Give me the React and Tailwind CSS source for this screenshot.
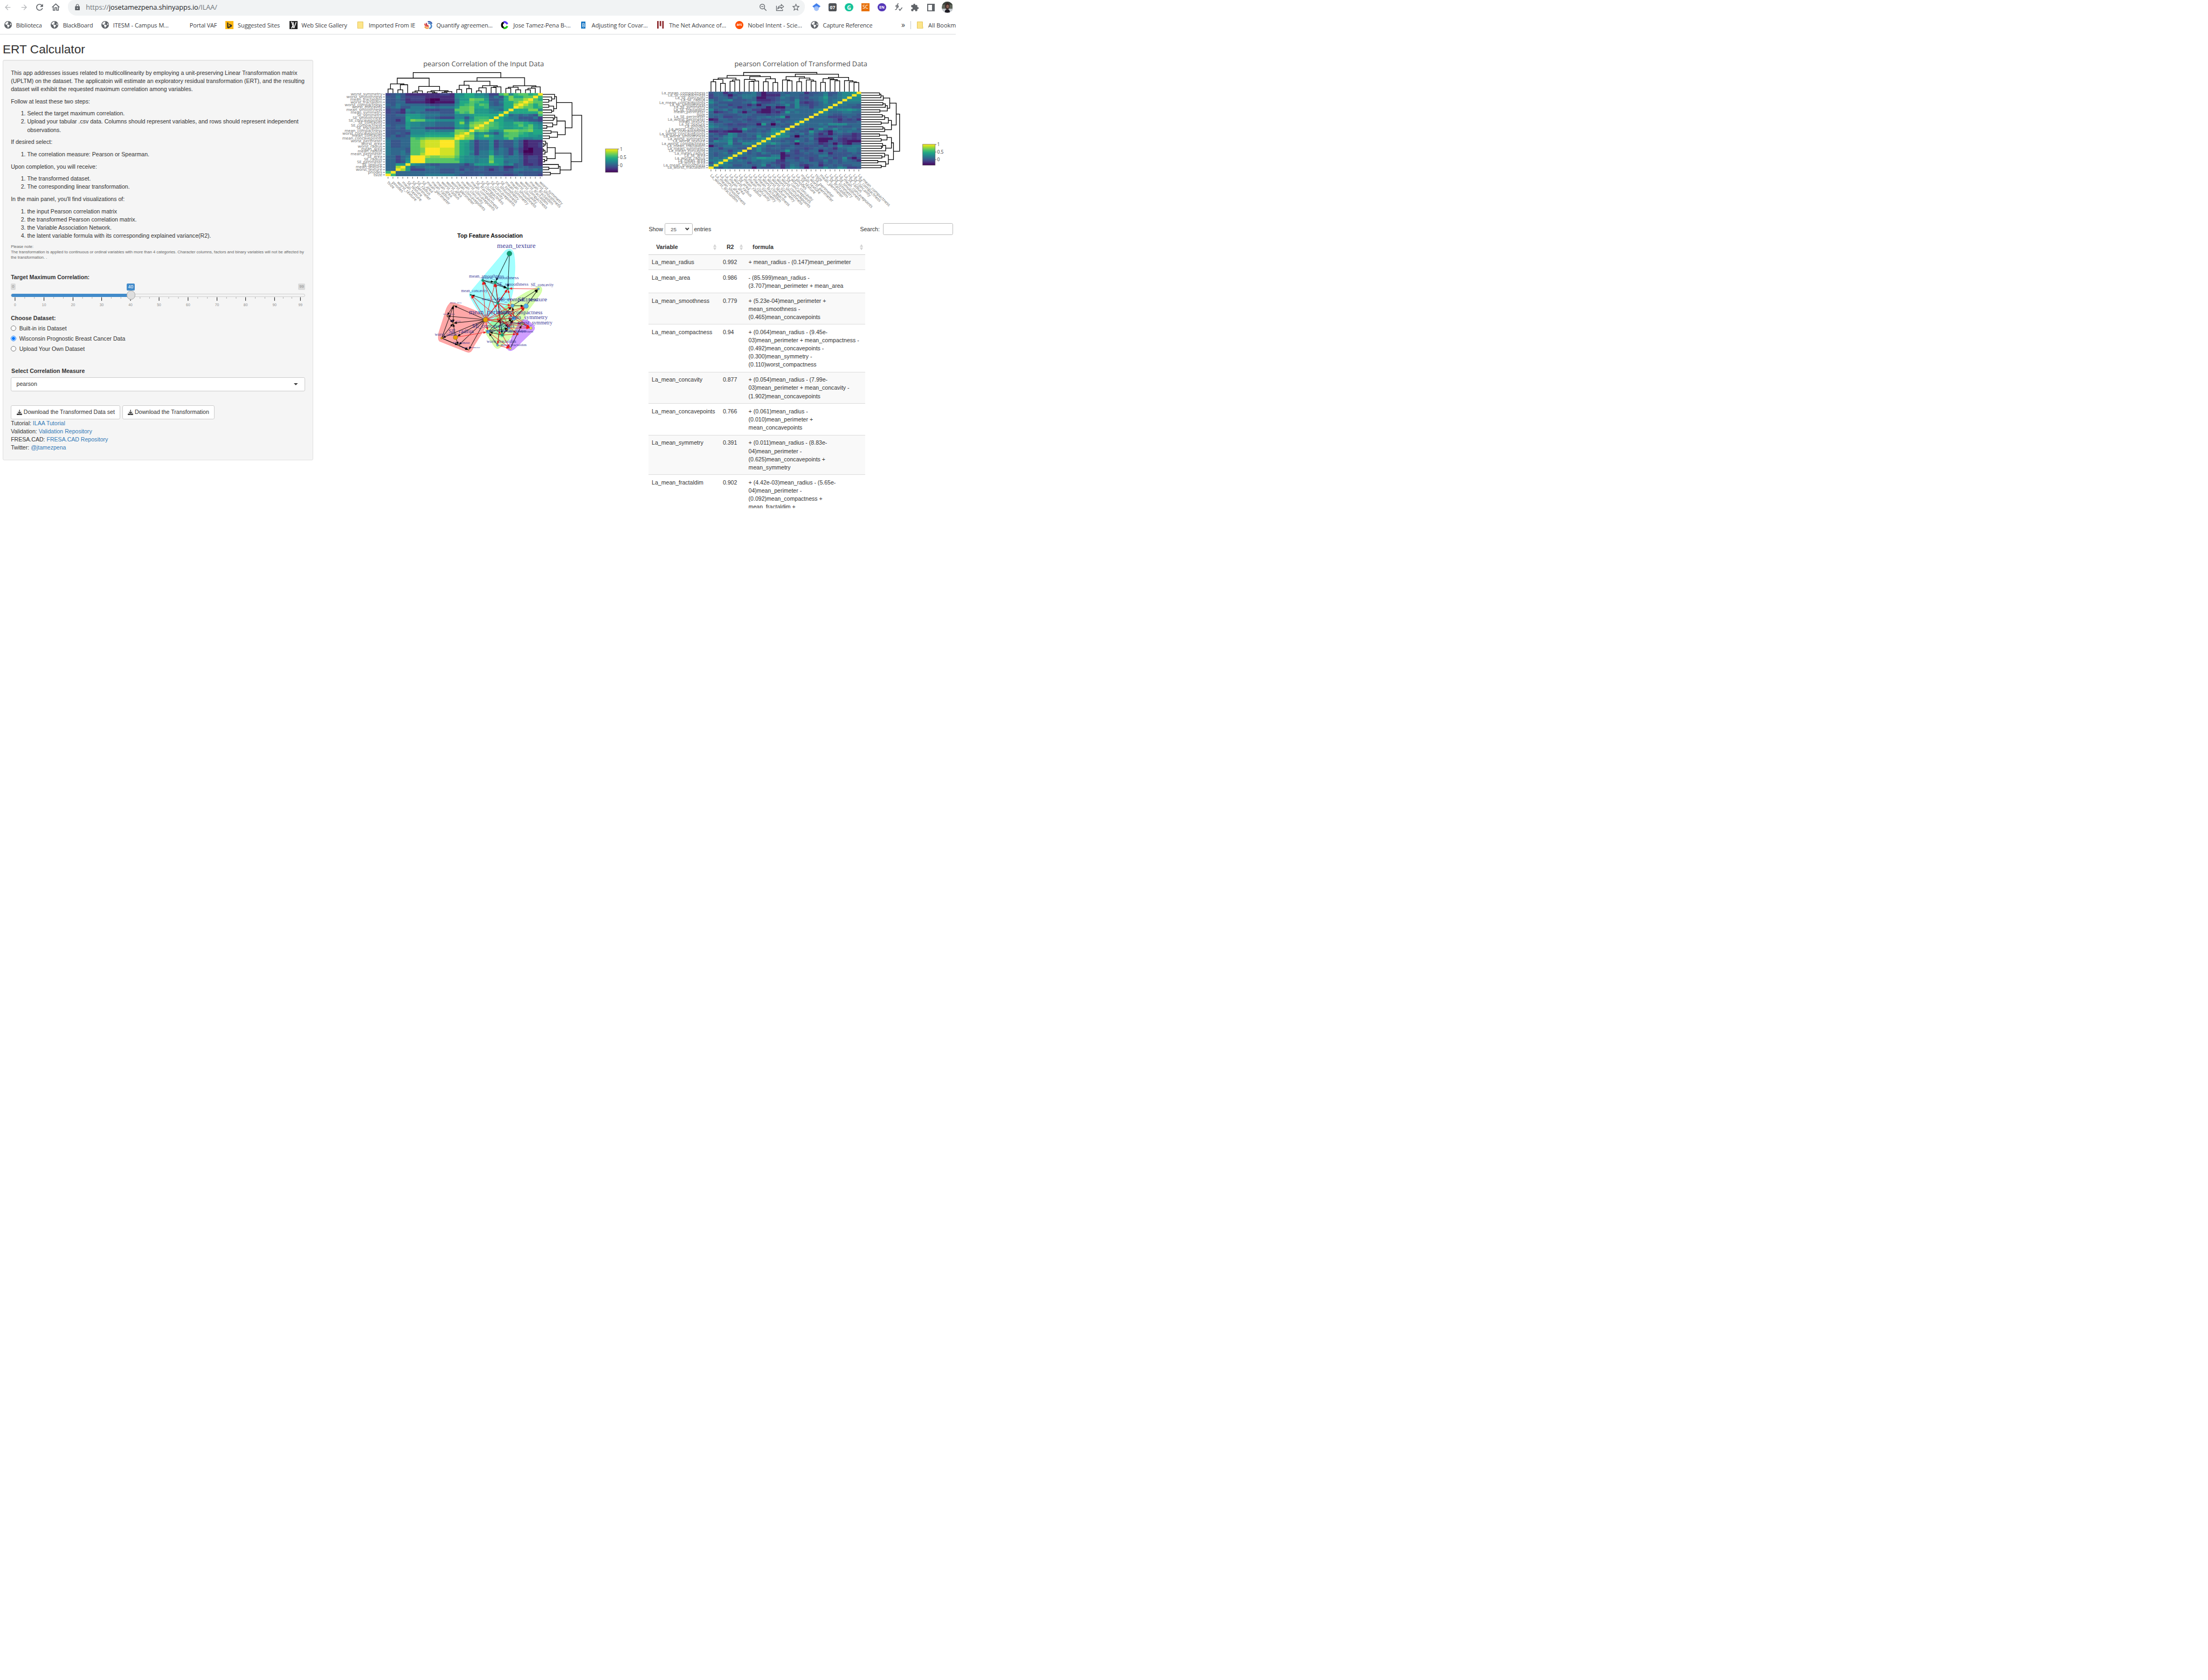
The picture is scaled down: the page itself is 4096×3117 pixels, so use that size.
import React from "react";
import { ArrowLeft, ArrowRight } from "lucide-react";
import { MdRefresh, MdOutlineHome, MdLock, MdStarBorder, MdExtension } from "react-icons/md";
import { FaEarthAmericas, FaDownload } from "react-icons/fa6";

/* ---------- colour scale ---------- */
const VIRIDIS = [
  [68, 1, 84], [72, 36, 117], [65, 68, 135], [53, 95, 141], [42, 120, 142],
  [33, 145, 140], [34, 168, 132], [68, 191, 112], [122, 209, 81], [189, 223, 38], [253, 231, 37],
];
function viridis(t) {
  const p = Math.min(Math.max(t, 0), 1) * 10;
  const i = Math.min(Math.floor(p), 9);
  const f = p - i;
  const c = VIRIDIS[i].map((v, k) => Math.round(v + (VIRIDIS[i + 1][k] - v) * f));
  return `rgb(${c.join(",")})`;
}

/* ---------- correlation matrices: lower triangles, one hex digit per cell ---------- */
const parseRows = (text) => text.trim().split("\n").map((l) => l.replace(/\s/g, ""));
const INPUT_ROWS = parseRows(`
f
af
55f
55df
5588 f
5534 8f
5535 7ff
5535 6fff
6556 5bbd f
6556 4bbc ff
6555 4bbc fff
6445 5bbd eeef
6445 5bbd eeef f
6445 5bbd eeef ff
5555 5bab cccc ccf
4534 5888 9999 99ef
4454 3777 8888 89cd f
4444 5777 6766 66cc bf
4454 8666 3333 3378 7bf
5455 8776 6655 5589 8cdf
4444 8776 6655 558c 7bcc f
4424 9cbb 8877 7789 68ab bf
4444 9887 5543 3377 47aa a9f
4455 8887 6665 5577 7899 999f
3432 6565 5554 449b ac88 8779 f
3442 7666 3334 44bb bc88 8765 9f
4564 4666 6656 668b bc99 a666 99f
5465 5555 4334 4479 ab9b a545 99df
4455 2222 1011 1169 9ba9 9546 99bd f
4454 2333 1002 2268 8cbb 8445 9cbb df
4464 3333 2222 2278 9988 7464 9c99 bbf
3454 2222 2223 3277 9977 633a c7ab b9af
`);
const TRANSFORMED_ROWS = parseRows(`
f
6f
47f
667f
5657 f
5455 6f
5456 46f
5555 356f
5535 5544 f
1456 6555 5f
5555 8447 76f
4766 8465 567f
4356 7454 4467 f
4546 7644 5485 6f
5433 7644 5565 68f
2232 1115 4454 578f
5445 4248 5455 4766 f
7655 4444 5544 4454 5f
6554 3433 4418 4045 45f
5345 5445 4445 5464 557f
1255 4454 3454 4544 4556 f
5453 3445 4455 6568 2555 5f
5554 4455 5444 3445 5555 55f
5234 5641 4521 1324 8565 556f
7456 4654 5331 1343 5655 5567 f
5544 5424 4544 1411 5475 5355 6f
5455 3444 2414 5545 7474 4345 66f
7544 4445 5743 3456 5573 2345 756f
6456 7444 5522 2345 5474 4456 7566 f
3455 3546 6511 3346 5454 3556 8556 7f
3554 1456 6641 2225 6554 4455 7456 77f
4552 4545 5641 3335 4555 2445 6446 778f
`);
const INPUT_LABELS = ["tsize", "pnodes", "worst_texture", "mean_texture", "SE_texture", "SE_perimeter", "SE_radius", "SE_area", "mean_perimeter", "mean_radius", "mean_area", "worst_radius", "worst_area", "worst_perimeter", "mean_concavepoints", "mean_concavity", "worst_concavepoints", "mean_compactness", "SE_fractaldim", "SE_compactness", "SE_concavity", "SE_concavepoints", "SE_smoothness", "SE_symmetry", "mean_symmetry", "mean_smoothness", "worst_concavity", "worst_compactness", "worst_fractaldim", "mean_fractaldim", "worst_smoothness", "worst_symmetry"];
const TRANSFORMED_LABELS = ["La_worst_fractaldim", "La_mean_smoothness", "La_worst_area", "La_mean_area", "La_worst_radius", "La_SE_area", "La_mean_radius", "La_mean_concavity", "La_mean_symmetry", "La_mean_fractaldim", "La_worst_compactness", "La_worst_texture", "La_worst_symmetry", "La_worst_smoothness", "La_worst_concavepoints", "La_SE_concavepoints", "La_worst_concavity", "La_pnodes", "La_SE_texture", "mean_texture", "La_worst_perimeter", "La_SE_perimeter", "tsize", "mean_perimeter", "La_SE_fractaldim", "La_SE_symmetry", "La_SE_smoothness", "La_mean_concavepoints", "La_SE_radius", "La_SE_concavity", "La_SE_compactness", "La_mean_compactness"];

/* dendrogram nodes: [height, left, right]; numbers are leaves */
const INPUT_TREE = [121,
  [88, [54, [24, 0, 1], [49, [19, 2, 3], 4]], [39, [13, [6, 5, 6], 7], [14, [7, 8, [2, 9, 10]], [9, [4, 11, 12], 13]]]],
  [91,
    [70, [46, [21, 14, 15], [26, 16, 17]], [44, [31, [13, 18, 19], 20], [37, [33, 21, 22], 23]]],
    [43, [34, [28, 24, 25], [19, 26, 27]], [37, [28, [19, 28, 29], 30], 31]]]];
const TRANSFORMED_TREE = [113,
  [95,
    [80, [72, [59, 0, 1], [49, 2, 3]], [69, [61, 4, 5], 6]],
    [89, [72, 7, [63, [60, 8, 9], 10]], [76, [59, 11, 12], [54, 13, 14]]]],
  [103,
    [89, [69, 15, [64, 16, 17]], [80, [59, 18, 19], [69, 20, [62, 21, 22]]]],
    [84, [77, [55, 23, 24], [71, 25, [64, 26, 27]]], [65, 28, [58, 29, [54, 30, 31]]]]]];

function treePaths(tree) {
  const out = [];
  const walk = (n) => {
    if (typeof n === "number") return { p: n, h: 0 };
    const a = walk(n[1]);
    const b = walk(n[2]);
    out.push([a, b, n[0]]);
    return { p: (a.p + b.p) / 2, h: n[0] };
  };
  walk(tree);
  return out;
}

function Heatmap({ id, w, title, titleX, titleW, rows, labels, tree, box, cb, tickX, labelX, labelY, size }) {
  const { x, y, width, height } = box;
  const cw = width / 32;
  const ch = height / 32;
  const px = (i) => x + (i + 0.5) * cw;
  const py = (i) => y + height - (i + 0.5) * ch;
  const cells = [];
  for (let r = 0; r < 32; r++)
    for (let c = 0; c < 32; c++) {
      const v = rows[Math.max(r, c)][Math.min(r, c)];
      cells.push(<rect key={r * 32 + c} x={x + c * cw} y={y + height - (r + 1) * ch} width={c < 31 ? cw + 0.5 : cw} height={r > 0 ? ch + 0.5 : ch} fill={viridis(parseInt(v, 16) / 15)} />);
    }
  const topH = tree[0];
  const paths = treePaths(tree);
  return (
    <svg width={w} height="320" viewBox={`0 0 ${w} 320`} className="block font-['Open_Sans','Noto_Sans',sans-serif]">
      <defs>
        <linearGradient id={id} x1="0" y1="1" x2="0" y2="0">
          {VIRIDIS.map((c, i) => <stop key={i} offset={i / 10} stopColor={`rgb(${c.join(",")})`} />)}
        </linearGradient>
      </defs>
      <text x={titleX} y="20" textLength={titleW} fontSize="13.6" fill="#4d4d4d">{title}</text>
      <g>{cells.reverse()}</g>
      <g fill="none" stroke="#000" strokeWidth="1.35">
        {paths.map(([a, b, h], i) => {
          const Y = (v) => y - (v / topH) * box.treeTop;
          const X = (v) => x + width + (v / topH) * box.treeRight;
          return (
            <React.Fragment key={i}>
              <path d={`M${px(a.p)} ${Y(a.h)}V${Y(h)}H${px(b.p)}V${Y(b.h)}`} />
              <path d={`M${X(a.h)} ${py(a.p)}H${X(h)}V${py(b.p)}H${X(b.h)}`} />
            </React.Fragment>
          );
        })}
      </g>
      <g stroke="#444" strokeWidth="0.9">
        {labels.map((l, i) => <path key={l} d={`M${tickX} ${py(i)}h4M${px(i)} ${y + height + 1.2}v3.6`} />)}
      </g>
      <g fontSize={size} fill="#6b6b6b">
        {labels.map((l, i) => <text key={l} x={labelX} y={py(i) + 2.4} textAnchor="end">{l}</text>)}
        {labels.map((l, i) => <text key={l} transform={`translate(${px(i) - 2} ${labelY}) rotate(45)`}>{l}</text>)}
      </g>
      <rect x={cb.x} y={cb.y} width={cb.w} height={cb.h} fill={`url(#${id})`} stroke="#444" strokeOpacity=".6" />
      {["1", "0.5", "0"].map((t, i) => (
        <g key={t}>
          <path d={`M${cb.x + cb.w} ${cb.y + 0.3 + i * cb.step}h2.5`} stroke="#444" strokeWidth=".8" />
          <text x={cb.x + cb.w + 4} y={cb.y + 3.6 + i * cb.step} fontSize="9" fill="#444">{t}</text>
        </g>
      ))}
    </svg>
  );
}

/* ---------- network ---------- */
const G = "#109e73", B = "#56b4e9", O = "#e69f00", Y = "#f0e442", R = "#ee2222";
const NODES = {
  mt: [540, 173, 15, G], ms: [383, 331, 7, G], ws: [457, 342, 9, G], ss: [531, 379, 7, G], mc: [312, 416, 5, G], mcp: [472, 466, 7, G],
  sc: [711, 381, 6, B], sco: [558, 480, 10, B], st: [638, 482, 14, B], wc: [566, 555, 12, B], scp: [414, 634, 10, B], wf: [470, 713, 6, B], sb: [537, 612, 7, B],
  mp: [399, 563, 14, O], sr: [222, 667, 13, O], wr: [141, 671, 6, O], ma: [211, 479, 3, O], wa: [172, 540, 3, O], sa: [209, 583, 3, O], sp: [240, 713, 3, O], wp: [300, 741, 3, O],
  wsy: [666, 612, 8, Y], msy: [615, 588, 9, "#c9c04a"], mf: [545, 732, 6, Y], r1: [586, 647, 7, R], g1: [498, 653, 8, G], h: [488, 560, 3, G],
};
const BLACK = "mt-ws mt-ss ms-ws ms-ss ws-ss mcp-ms mcp-ws mcp-ss mcp-mc sco-sc st-sc sco-st mp-ma mp-wa mp-sa mp-wr mp-sr mp-sp mp-wp wr-ma wr-sa sr-sa sr-sp wr-sp wr-wp sp-wp ma-wa ma-sa wa-sa wf-scp wf-h mcp-g1 scp-wc scp-sb wc-sco wc-st g1-wc g1-sb sb-wc mf-msy msy-wsy h-wc h-sb scp-h g1-scp h-sco".split(" ");
const RED = "mp-ms mp-ws mp-ss mp-mc mp-mcp mp-sco mp-st mp-wc mp-scp sc-ss mcp-ss mcp-wc mcp-sco mcp-sb mcp-wsy sr-scp mp-g1 mp-wsy mp-msy h-ms h-ws h-mc h-st wc-ss g1-mf wf-mf scp-mf h-r1 g1-r1 g1-st h-wf wc-wsy sb-wsy mp-h".split(" ");
const NET_LABELS = [
  ["mean_texture", 467, 694, 130, 40], ["mean_smoothness", 302, 508, 307, 28], ["worst_smoothness", 375, 595, 315, 28], ["SE_smoothness", 465, 652, 354, 28],
  ["SE_concavity", 666, 801, 358, 24], ["mean_concavity", 256, 410, 395, 24], ["mean_concavepoints", 378, 560, 441, 22], ["SE_compactness", 470, 705, 445, 33],
  ["SE_texture", 590, 762, 445, 35], ["mean_area", 190, 257, 463, 15], ["worst_area", 149, 217, 528, 15], ["mean_perimeter", 302, 560, 521, 39],
  ["worst_compactness", 475, 735, 521, 33], ["mean_symmetry", 533, 766, 548, 36], ["SE_area", 193, 252, 571, 16], ["worst_symmetry", 590, 793, 582, 31],
  ["SE_concavepoints", 320, 570, 602, 33], ["SE_radius", 181, 330, 633, 36], ["worst_radius", 100, 230, 650, 24], ["mean_compactness", 530, 680, 632, 21], ["SE_symmetry", 480, 620, 584, 27],
  ["worst_concavity", 400, 560, 628, 25], ["SE_fractaldim", 500, 640, 630, 22],
  ["SE_perimeter", 208, 307, 700, 18], ["worst_perimeter", 260, 367, 727, 16], ["worst_fractaldim", 406, 580, 692, 24], ["mean_fractaldim", 488, 641, 713, 22],
];
function Edge({ e, color }) {
  const [a, b] = e.split("-").map((k) => NODES[k]);
  const dx = b[0] - a[0], dy = b[1] - a[1], d = Math.hypot(dx, dy) || 1;
  const ux = dx / d, uy = dy / d;
  const tx = b[0] - ux * (b[2] + 1), ty = b[1] - uy * (b[2] + 1);
  const bx = tx - ux * 16, by = ty - uy * 16;
  return (
    <g fill={color} stroke={color}>
      <path d={`M${a[0]} ${a[1]}L${bx} ${by}`} strokeWidth="3.4" strokeOpacity=".78" />
      <path d={`M${tx} ${ty}L${bx - uy * 6} ${by + ux * 6}L${bx + uy * 6} ${by - ux * 6}Z`} strokeWidth="1.5" />
    </g>
  );
}
function Network() {
  return (
    <svg width="320" height="260" viewBox="0 0 960 780" className="block">
      <text x="233" y="78" textLength="386" fontSize="34" fontWeight="700" fill="#111" className="font-['Liberation_Sans',Arial,sans-serif]">Top Feature Association</text>
      <g strokeWidth="2">
        <path d="M208 463Q192 458 183 472Q168 490 158 530L123 640Q116 680 128 690L285 752Q302 760 314 750Q324 740 330 720L420 575Q428 555 410 545Q390 535 330 505Q270 478 208 463Z" fill="#ff0000" fillOpacity=".34" stroke="#ff0000" strokeOpacity=".3" />
        <path d="M540 146Q560 148 567 175Q578 240 568 330Q566 400 540 470L512 655Q500 676 484 662L390 560Q345 500 305 425Q300 408 312 396L515 156Q525 146 540 146Z" fill="#00ffff" fillOpacity=".36" stroke="#00ffff" strokeOpacity=".35" />
        <path d="M700 372Q722 358 731 378Q734 395 722 412L650 510L580 640L490 722Q470 744 452 722L398 640Q392 622 410 600L540 460L640 400Z" fill="#80ff00" fillOpacity=".32" stroke="#80ff00" strokeOpacity=".4" />
        <path d="M620 565Q640 555 672 585Q698 605 684 626L570 735Q540 756 528 736L560 650Q590 580 620 565Z" fill="#8000ff" fillOpacity=".38" stroke="#8000ff" strokeOpacity=".35" />
      </g>
      {BLACK.map((e, i) => <Edge key={i} e={e} color="#000" />)}
      {RED.map((e, i) => <Edge key={i} e={e} color="#f01818" />)}
      {Object.entries(NODES).map(([k, n]) => <circle key={k} cx={n[0]} cy={n[1]} r={n[2]} fill={n[3]} stroke="#333" strokeOpacity=".7" strokeWidth="1.5" />)}
      <g fill="#22228a" fillOpacity=".9" className="font-['Liberation_Serif','Times_New_Roman',serif]">
        {NET_LABELS.map(([t, a, b, y, s]) => <text key={t} x={a} y={y + s * 0.27} textLength={b - a} lengthAdjust="spacingAndGlyphs" fontSize={s}>{t}</text>)}
      </g>
    </svg>
  );
}

/* ---------- browser chrome ---------- */
const Globe = () => <FaEarthAmericas className="size-[15px] text-[#5f6368]" />;
const Folder = () => (
  <svg width="12" height="14" viewBox="0 0 12 14"><path d="M.5.5h10.5v9.5h.6v3.5H.5z" fill="#fde58a" stroke="#e3bf4e" /></svg>
);
const BOOKMARKS = [
  { w: "w-[92px]", i: "w-[23.4px]", t: "tracking-[-0.2px]", label: "Biblioteca", icon: <Globe /> },
  { w: "w-[99px]", i: "w-[23.5px]", t: "tracking-[-0.2px]", label: "BlackBoard", icon: <Globe /> },
  { w: "w-[151px]", i: "w-[23px]", t: "tracking-[0px]", label: "ITESM - Campus M...", icon: <Globe /> },
  { w: "w-[93px]", i: "w-[22.5px]", t: "tracking-[-0.2px]", label: "Portal VAF", icon: null },
  { w: "w-[125px]", i: "w-[24px]", t: "tracking-[-0.1px]", label: "Suggested Sites", icon: <svg width="16" height="16" viewBox="0 0 16 16"><path d="M0 0h16v16H0z" fill="#fdb813" /><path d="M3.5 2.5l2.5 1v8l4-2.3-2-1-1.2-2.8 6.2 2.2v3l-7 3.9-2.5-1.5z" fill="#3f3522" /></svg> },
  { w: "w-[134px]", i: "w-[24px]", t: "tracking-[-0.15px]", label: "Web Slice Gallery", icon: <svg width="16" height="16" viewBox="0 0 16 16"><path d="M0 0h16v16H0z" fill="#222" /><path d="M3 1.5c4 1 1 5 4 7-1 3-3 4-3 6M7 2c1 3 1 6 0 12M13 2c-1 5-3 6-4 12" stroke="#fff" strokeWidth="1.6" fill="none" /></svg> },
  { w: "w-[131px]", i: "w-[22px]", t: "tracking-[-0.2px]", label: "Imported From IE", icon: <Folder /> },
  { w: "w-[151px]", i: "w-[24px]", t: "tracking-[-0.15px]", label: "Quantify agreemen...", icon: <svg width="16" height="16" viewBox="0 0 16 16" fill="none" strokeWidth="2.6"><path d="M7 1.5c4-1 7 1 8 4" stroke="#3a5fb0" /><path d="M8 5c3-2 5 0 6 4s-2 5-4 6" stroke="#4a86c8" /><path d="M5 4c-2 2-1 5 3 5" stroke="#b53a5a" /><path d="M1 5c0 4 3 6 8 5" stroke="#e8604a" /><path d="M1 11c2 3 5 4 8 2" stroke="#f0a04a" /></svg> },
  { w: "w-[157px]", i: "w-[24px]", t: "tracking-[-0.1px]", label: "Jose Tamez-Pena B-...", icon: <svg width="15" height="16" viewBox="0 0 15 16" fill="none" strokeWidth="3.6"><path d="M6 3C1 4 1 12 6 13" stroke="#000" /><path d="M5.5 2c4-.5 6 1 7.500 4" stroke="#5b3df5" /><path d="M5.500 14c4 .5 6-1 7.500-4" stroke="#22c11a" /></svg> },
  { w: "w-[150px]", i: "w-[21px]", t: "tracking-[-0.1px]", label: "Adjusting for Covar...", icon: <svg width="9" height="14" viewBox="0 0 9 14"><rect width="9" height="14" rx="1" fill="#1676c4" /><path d="M3 3.500h2a1.600 1.600 0 010 3.500H3zM3 7h2.300a1.700 1.700 0 010 3.500H3z" fill="none" stroke="#fff" /></svg> },
  { w: "w-[153px]", i: "w-[23px]", t: "tracking-[-0.1px]", label: "The Net Advance of...", icon: <svg width="13" height="15" viewBox="0 0 13 15" fill="#8f2d31"><path d="M0 0h3v15H0zM5 0h3v10H5zM10 0h3v15h-3z" /></svg> },
  { w: "w-[148px]", i: "w-[24.5px]", t: "tracking-[-0.05px]", label: "Nobel Intent - Scie...", icon: <span className="flex size-4 items-center justify-center rounded-full bg-[#ff4e00] text-[6.5px] font-bold leading-none text-white">ars</span> },
  { w: "w-[178px]", i: "w-[24px]", t: "tracking-[-0.2px]", label: "Capture Reference", icon: <Globe /> },
];

function Browser() {
  return (
    <header className="h-[68px] w-[1877px] overflow-hidden border-b border-[#d9dbde] font-['Open_Sans','Noto_Sans',sans-serif] text-[#3c4043]">
      <div className="flex h-[31px] items-center text-[#5f6368]">
        <div className="flex w-[133.5px] shrink-0 items-center pb-[2px] pl-[7px]">
          <ArrowLeft className="mr-[16px] size-4 text-[#b4b6b9]" />
          <ArrowRight className="mr-[13px] size-4 text-[#b4b6b9]" />
          <MdRefresh className="mr-[12px] size-[20px]" />
          <MdOutlineHome className="size-[20px]" />
        </div>
        <div className="flex h-[31px] w-[1447.5px] shrink-0 items-center rounded-b-[17px] rounded-t-[12px] bg-[#f1f3f4] pb-[2px] pl-[11px] pr-[9px]">
          <MdLock className="mr-[10px] size-[14px]" />
          <span className="grow text-[13.5px] tracking-[-0.1px] text-[#70757a]">https://<span className="text-[#202124]">josetamezpena.shinyapps.io</span>/ILAA/</span>
          <svg width="16" height="16" viewBox="0 0 16 16" fill="none" stroke="#5f6368" strokeWidth="1.4" className="mr-[16px]"><circle cx="6.5" cy="6.5" r="4.6" /><path d="M10 10l4.5 4.5M4.3 6.5h4.4" /></svg>
          <svg width="17" height="16" viewBox="0 0 17 16" fill="none" stroke="#5f6368" strokeWidth="1.3" className="mr-[14px]"><path d="M1.5 5v9.5h12V12M4 11c.5-4 3-6 7-6V2.5L15.5 6.5 11 10.5V8c-3 0-5 .8-7 3z" /></svg>
          <MdStarBorder className="size-[18px]" />
        </div>
        <div className="flex items-center gap-[16px] pb-[2px] pl-[14px]">
          <svg width="16" height="16" viewBox="0 0 16 16"><path d="M8 0l8 6-3.5 3h-9L0 6z" fill="#4380ec" /><circle cx="8" cy="10.5" r="4.8" fill="#a3c2f8" /></svg>
          <span className="flex size-4 items-center justify-center rounded-[3px] bg-[#4f5256] text-[9px] font-bold text-white">07</span>
          <span className="flex size-[16.5px] items-center justify-center rounded-full bg-[#15c39a] text-[11px] font-bold leading-none text-white">G</span>
          <span className="flex size-4 items-center justify-center bg-[#e8710a] text-[9.5px] leading-none text-white">SC</span>
          <span className="flex size-[16.5px] items-center justify-center rounded-full bg-[#5436b8] text-[7.5px] font-bold leading-none text-white">EN</span>
          <svg width="16" height="16" viewBox="0 0 16 16" fill="none" stroke="#5f6368" strokeWidth="1.5"><path d="M8.5 1.5C6 0 5.5 3 5.5 6s0 7-4 6.5M2 6c2-2 6-2 6 .5S4 8 4 6.5M9 11l2 3 4.5-5.5" /></svg>
          <MdExtension className="size-[17px]" />
          <svg width="15" height="15" viewBox="0 0 15 15"><path d="M1 1h13v13H1z" fill="none" stroke="#5f6368" strokeWidth="2" /><path d="M9.5 1H14v13H9.5z" fill="#5f6368" /></svg>
          <svg width="22" height="22" viewBox="0 0 22 22" className="-ml-[3px]"><defs><clipPath id="av"><circle cx="11" cy="11" r="11" /></clipPath></defs><g clipPath="url(#av)"><path d="M0 0h22v22H0z" fill="#5f665c" /><path d="M0 0h22v6H0z" fill="#3c423c" /><path d="M0 14h22v8H0z" fill="#c8ccd2" /><path d="M6 22c0-6 2-7 5-7s5 1 5 7z" fill="#1c1a22" /><ellipse cx="11" cy="9" rx="4.5" ry="6.5" fill="#3b2927" /><ellipse cx="11.5" cy="9.5" rx="2.6" ry="3.5" fill="#8a6253" /></g></svg>
        </div>
      </div>
      <div className="flex h-[36px] items-center pl-[8px] text-[11.6px]">
        {BOOKMARKS.map((b) => (
          <div key={b.label} className={`flex shrink-0 items-center whitespace-nowrap ${b.w}`}>
            <span className={`shrink-0 ${b.i}`}>{b.icon}</span>
            <span className={b.t}>{b.label}</span>
          </div>
        ))}
        <span className="w-[18px] shrink-0 text-[15px] leading-none">»</span>
        <span className="mr-[12px] h-4 w-px shrink-0 bg-[#c4c7c9]" />
        <span className="w-[22px] shrink-0"><Folder /></span>
        <span className="shrink-0">All Bookm</span>
      </div>
    </header>
  );
}

/* ---------- sidebar ---------- */
const List = ({ items }) => (
  <ol className="mb-[8px] list-decimal pl-[32px]">{items.map((t) => <li key={t}>{t}</li>)}</ol>
);
const P = ({ children }) => <p className="mb-[8px]">{children}</p>;
const TICKS = [29.4, 86.3, 143.3, 199.6, 256.3, 312.4, 369.4, 426.3, 482.5, 539.4, 590.2];

function Slider() {
  return (
    <div className="relative h-[50px] w-[578px]">
      <div className="flex items-start justify-between text-[8px] leading-none text-[#8a8a8a]">
        <span className="flex h-[12px] w-[9px] items-center justify-center rounded-[2px] bg-[#dbdbdb]">0</span>
        <span className="flex h-[12px] w-[14px] items-center justify-center rounded-[2px] bg-[#dbdbdb]">99</span>
      </div>
      <div className="mt-[8px] h-[6px] rounded-full border border-[#cfcfcf] bg-[#f3f3f3]"><div className="-mt-px h-[6px] w-[236px] rounded-l-full bg-[#428bca]" /></div>
      <svg width="578" height="24" viewBox="21.2 0 578 24" className="block overflow-visible font-['Liberation_Sans',Arial,sans-serif]">
        {TICKS.map((x, i) => (
          <g key={x}>
            <path d={`M${x} .5v7`} stroke="#000" />
            <text x={x} y="17.5" fontSize="7.2" textAnchor="middle" fill="#8c8c8c">{i === 10 ? 99 : i * 10}</text>
            {i < 10 && [1, 2].map((k) => <path key={k} d={`M${x + ((TICKS[i + 1] - x) * k) / 3} .5v2.5`} stroke="#999" />)}
          </g>
        ))}
      </svg>
      <span className="absolute left-[227.8px] top-0 flex h-[13px] w-[15px] items-center justify-center rounded-[2px] bg-[#428bca] text-[8.8px] leading-none text-white">40</span>
      <span className="absolute left-[227px] top-[13px] h-[18px] w-[17px] rounded-full border border-[#aaa] bg-[#dedede]" />
    </div>
  );
}
const Radio = ({ on, label }) => (
  <div className="flex h-[20px] items-center">
    <span className={`mr-[6px] flex size-[10.4px] items-center justify-center rounded-full border bg-white ${on ? "border-[#0075ff]" : "border-[#767676]"}`}>{on && <span className="size-[6px] rounded-full bg-[#0075ff]" />}</span>
    {label}
  </div>
);
const Button = ({ w, children }) => (
  <span className={`flex h-[27.5px] items-center justify-center gap-[3px] whitespace-nowrap rounded-[3px] border border-[#ccc] bg-white ${w}`}><FaDownload className="size-[11px]" />{children}</span>
);
function Sidebar() {
  return (
    <aside className="ml-[5.3px] w-[609.5px] shrink-0 pt-[15.5px]">
      <h2 className="mb-[8px] h-[26.5px] text-[24px] font-normal leading-[26.4px]">ERT Calculator</h2>
      <div className="h-[786px] rounded-[3px] border border-[#e0e0e0] bg-[#f5f5f5] px-[15px] pt-[16.3px] shadow-[inset_0_1px_1px_rgba(0,0,0,0.05)]">
        <P>This app addresses issues related to multicollinearity by employing a unit-preserving Linear Transformation matrix (UPLTM) on the dataset. The applicatoin will estimate an exploratory residual transformation (ERT), and the resulting dataset will exhibit the requested maximum correlation among variables.</P>
        <P>Follow at least these two steps:</P>
        <List items={["Select the target maximum correlation.", "Upload your tabular .csv data. Columns should represent variables, and rows should represent independent observations."]} />
        <P>If desired select:</P>
        <List items={["The correlation measure: Pearson or Spearman."]} />
        <P>Upon completion, you will receive:</P>
        <List items={["The transformed dataset.", "The corresponding linear transformation."]} />
        <P>In the main panel, you'll find visualizations of:</P>
        <List items={["the input Pearson correlation matrix", "the transformed Pearson correlation matrix.", "the Variable Association Network.", "the latent variable formula with its corresponding explained variance(R2)."]} />
        <div className="h-[58px] whitespace-nowrap text-[8px] leading-[11px] text-[#666]">Please note:<br />The transformation is applied to continuous or ordinal variables with more than 4 categories. Character columns, factors and binary variables will not be affected by<br />the transformation. .</div>
        <div className="h-[20px] font-bold">Target Maximum Correlation:</div>
        <Slider />
        <div className="mt-[10px] h-[18px] font-bold">Choose Dataset:</div>
        <Radio label="Built-in iris Dataset" />
        <Radio on label="Wisconsin Prognostic Breast Cancer Data" />
        <Radio label="Upload Your Own Dataset" />
        <div className="mb-[4px] mt-[26px] h-[16px] pl-px font-bold">Select Correlation Measure</div>
        <div className="flex h-[27px] w-[578px] items-center justify-between rounded-[3px] border border-[#ccc] bg-white pl-[10px] pr-[13px]">pearson<svg width="8" height="4" viewBox="0 0 8 4"><path d="M0 0h8L4 4z" fill="#333" /></svg></div>
        <div className="mt-[28px] flex gap-[3.5px]"><Button w="w-[215px]">Download the Transformed Data set</Button><Button w="w-[181.5px]">Download the Transformation</Button></div>
        {[["Tutorial", "ILAA Tutorial"], ["Validation", "Validation Repository"], ["FRESA.CAD", "FRESA.CAD Repository"], ["Twitter", "@jtamezpena"]].map(([a, b]) => (
          <div key={a}>{a}: <a className="text-[#337ab7]">{b}</a></div>
        ))}
      </div>
    </aside>
  );
}

/* ---------- table ---------- */
const ROWS = [
  ["h-[30px]", "La_mean_radius", "0.992", ["+ mean_radius - (0.147)mean_perimeter"]],
  ["h-[46px]", "La_mean_area", "0.986", ["- (85.599)mean_radius -", "(3.707)mean_perimeter + mean_area"]],
  ["h-[61.5px]", "La_mean_smoothness", "0.779", ["+ (5.23e-04)mean_perimeter +", "mean_smoothness -", "(0.465)mean_concavepoints"]],
  ["h-[93.5px]", "La_mean_compactness", "0.94", ["+ (0.064)mean_radius - (9.45e-", "03)mean_perimeter + mean_compactness -", "(0.492)mean_concavepoints -", "(0.300)mean_symmetry -", "(0.110)worst_compactness"]],
  ["h-[62px]", "La_mean_concavity", "0.877", ["+ (0.054)mean_radius - (7.99e-", "03)mean_perimeter + mean_concavity -", "(1.902)mean_concavepoints"]],
  ["h-[62px]", "La_mean_concavepoints", "0.766", ["+ (0.061)mean_radius -", "(0.010)mean_perimeter +", "mean_concavepoints"]],
  ["h-[77.5px]", "La_mean_symmetry", "0.391", ["+ (0.011)mean_radius - (8.83e-", "04)mean_perimeter -", "(0.625)mean_concavepoints +", "mean_symmetry"]],
  ["h-[78px]", "La_mean_fractaldim", "0.902", ["+ (4.42e-03)mean_radius - (5.65e-", "04)mean_perimeter -", "(0.092)mean_compactness +", "mean_fractaldim +"]],
];
const Sort = () => (
  <svg width="6.5" height="12" viewBox="0 0 6.5 12" fill="#d4d4d4"><path d="M3.25 0L6.5 5.3H0zM3.25 12L6.5 6.7H0z" /></svg>
);
function DataTable() {
  return (
    <div className="ml-[14px] mt-[8px] h-[560.7px] w-[600px] overflow-hidden">
      <div className="flex h-[24px] items-center">
        <span className="w-[31px]">Show</span>
        <span className="mr-[3px] flex h-[24px] w-[55px] items-center justify-between rounded-[3px] border border-[#bbb] pl-[11px] pr-[5px] text-[10.4px] text-[#555]">25<svg width="8" height="6" viewBox="0 0 8 6"><path d="M.7 1L4 4.5 7.3 1" fill="none" stroke="#333" strokeWidth="2" /></svg></span>
        <span className="grow">entries</span>
        <span className="mr-[6px]">Search:</span>
        <span className="mr-[2px] h-[24px] w-[138.5px] rounded-[3px] border border-[#bbb]" />
      </div>
      <div className="w-[425px]">
        <div className="flex h-[38.3px] items-end border-b border-[#d0d0d0] pb-[6px] font-bold">
          <span className="w-[127px] shrink-0 pl-[14.5px]">Variable</span><span className="w-[26px] shrink-0 pb-[2px]"><Sort /></span>
          <span className="w-[25px] shrink-0">R2</span><span className="w-[26px] shrink-0 pb-[2px]"><Sort /></span>
          <span className="grow">formula</span><span className="pb-[2px] pr-[4px]"><Sort /></span>
        </div>
        {ROWS.map(([h, v, r, f], i) => (
          <div key={v} className={`flex border-b border-[#dcdcdc] pt-[7px] last:border-0 ${h} ${i % 2 ? "bg-white" : "bg-[#f9f9f9]"}`}>
            <span className="w-[145.5px] shrink-0 pl-[6px]">{v}</span>
            <span className="w-[50.5px] shrink-0">{r}</span>
            <span className="whitespace-nowrap">{f.map((l) => <span key={l} className="block">{l}</span>)}</span>
          </div>
        ))}
      </div>
    </div>
  );
}

export default function App() {
  return (
    <div className="h-[3299.5px] w-[4336px] overflow-hidden bg-white font-['Liberation_Sans',Arial,sans-serif] text-[11.2px] leading-[16px] text-[#333] [zoom:0.94464]">
      <Browser />
      <main className="flex items-start">
        <Sidebar />
        <section className="ml-[45.2px] w-[600px] shrink-0 pt-[42px]">
          <Heatmap id="scale-input" w={580} title="pearson Correlation of the Input Data" titleX={171.7} titleW={237} rows={INPUT_ROWS} labels={INPUT_LABELS} tree={INPUT_TREE}
            box={{ x: 97.7, y: 72.7, width: 308.5, height: 163.3, treeTop: 40.3, treeRight: 76.6 }} cb={{ x: 529.4, y: 182.3, w: 24.4, h: 46, step: 16 }} tickX={92.5} labelX={91} labelY={249} size={8} />
          <div className="ml-[160px] mt-[10px]"><Network /></div>
        </section>
        <section className="w-[640px] shrink-0 pt-[42px]">
          <Heatmap id="scale-transformed" w={640} title="pearson Correlation of Transformed Data" titleX={182.5} titleW={261} rows={TRANSFORMED_ROWS} labels={TRANSFORMED_LABELS} tree={TRANSFORMED_TREE}
            box={{ x: 131.8, y: 70, width: 299.6, height: 151.7, treeTop: 37.7, treeRight: 75.5 }} cb={{ x: 552.2, y: 173.3, w: 24.5, h: 41, step: 14.9 }} tickX={126.8} labelX={125.3} labelY={235} size={8} />
          <DataTable />
        </section>
      </main>
    </div>
  );
}
